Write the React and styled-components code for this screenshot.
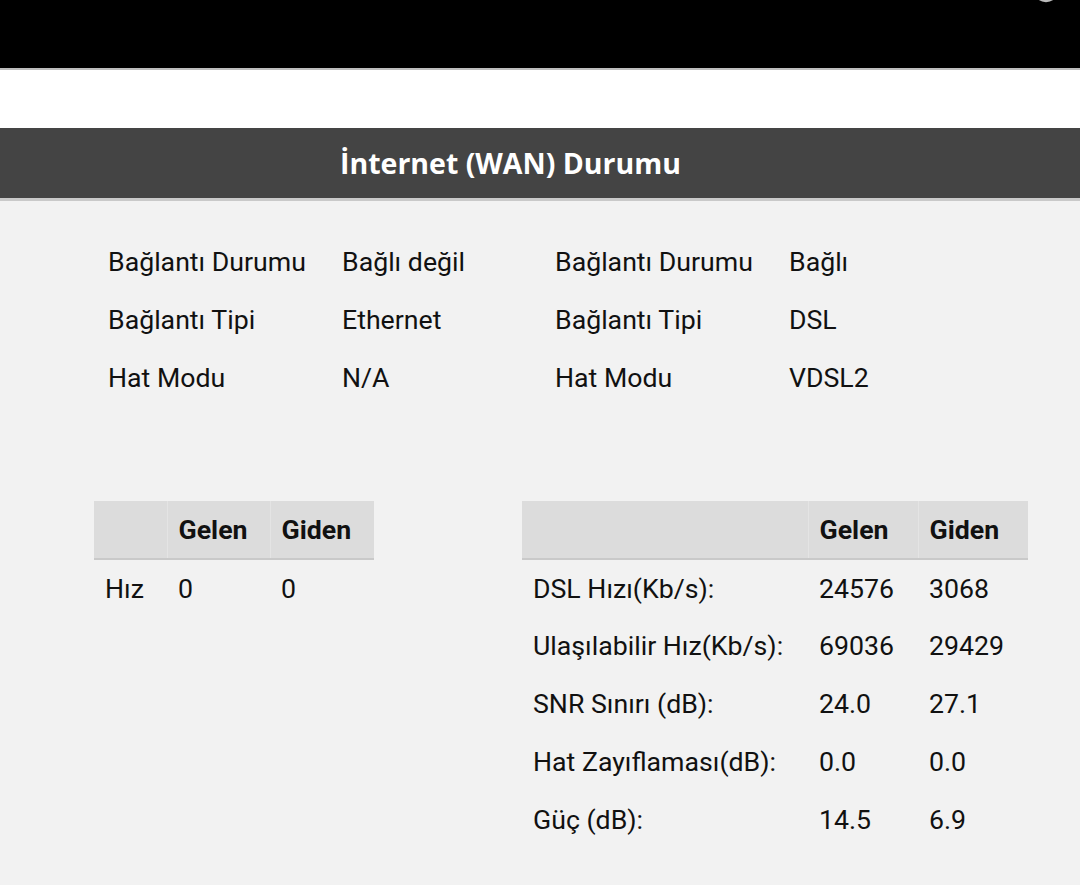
import React from "react";
import styled, { createGlobalStyle } from "styled-components";

const GlobalStyle = createGlobalStyle`
  html, body {
    margin: 0;
    padding: 0;
    background: #f2f2f2;
    font-family: Roboto, "Liberation Sans", sans-serif;
    color: #111;
  }
`;

const infoLeft = [
  ["Bağlantı Durumu", "Bağlı değil"],
  ["Bağlantı Tipi", "Ethernet"],
  ["Hat Modu", "N/A"],
];

const infoRight = [
  ["Bağlantı Durumu", "Bağlı"],
  ["Bağlantı Tipi", "DSL"],
  ["Hat Modu", "VDSL2"],
];

const dslRows = [
  ["DSL Hızı(Kb/s):", "24576", "3068"],
  ["Ulaşılabilir Hız(Kb/s):", "69036", "29429"],
  ["SNR Sınırı (dB):", "24.0", "27.1"],
  ["Hat Zayıflaması(dB):", "0.0", "0.0"],
  ["Güç (dB):", "14.5", "6.9"],
];

const App = () => {
  return (
    <Page>
      <GlobalStyle />
      <TopBar>
        <TopIcon viewBox="0 0 24 24">
          <circle cx="12" cy="12" r="10" fill="none" stroke="#bbb" strokeWidth="2.5" />
        </TopIcon>
      </TopBar>
      <Spacer />
      <TitleBar>İnternet (WAN) Durumu</TitleBar>
      <Content>
        <InfoGrid>
          <InfoGroup>
            {infoLeft.map(([k, v]) => (
              <React.Fragment key={k}>
                <InfoCell>{k}</InfoCell>
                <InfoCell>{v}</InfoCell>
              </React.Fragment>
            ))}
          </InfoGroup>
          <InfoGroup>
            {infoRight.map(([k, v]) => (
              <React.Fragment key={k}>
                <InfoCell>{k}</InfoCell>
                <InfoCell>{v}</InfoCell>
              </React.Fragment>
            ))}
          </InfoGroup>
        </InfoGrid>

        <Tables>
          <Table width={280}>
            <colgroup>
              <col style={{ width: 73 }} />
              <col style={{ width: 103 }} />
              <col style={{ width: 104 }} />
            </colgroup>
            <thead>
              <tr>
                <Th />
                <Th>Gelen</Th>
                <Th>Giden</Th>
              </tr>
            </thead>
            <tbody>
              <tr>
                <Td>Hız</Td>
                <Td>0</Td>
                <Td>0</Td>
              </tr>
            </tbody>
          </Table>

          <Table width={506}>
            <colgroup>
              <col style={{ width: 286 }} />
              <col style={{ width: 110 }} />
              <col style={{ width: 110 }} />
            </colgroup>
            <thead>
              <tr>
                <Th />
                <Th>Gelen</Th>
                <Th>Giden</Th>
              </tr>
            </thead>
            <tbody>
              {dslRows.map(([label, down, up]) => (
                <tr key={label}>
                  <Td>{label}</Td>
                  <Td>{down}</Td>
                  <Td>{up}</Td>
                </tr>
              ))}
            </tbody>
          </Table>
        </Tables>
      </Content>
    </Page>
  );
};

const Page = styled.div`
  width: 1080px;
  min-height: 885px;
  display: flex;
  flex-direction: column;
  background: #f2f2f2;
`;

const TopBar = styled.div`
  height: 68px;
  background: #000;
  border-bottom: 2px solid #bdbdbd;
  display: flex;
  justify-content: flex-end;
  overflow: hidden;
`;

const TopIcon = styled.svg`
  width: 28px;
  height: 28px;
  margin: -25px 20px 0 0;
`;

const Spacer = styled.div`
  height: 58px;
  background: #fff;
`;

const TitleBar = styled.div`
  height: 70px;
  background: #444;
  border-bottom: 3px solid #c9c9c9;
  color: #fff;
  font-family: "Open Sans", Roboto, sans-serif;
  font-weight: 700;
  font-size: 28.5px;
  display: flex;
  align-items: center;
  justify-content: center;
  padding-right: 59px;
`;

const Content = styled.div`
  flex: 1;
  padding: 32px 0 0 94px;
`;

const InfoGrid = styled.div`
  display: grid;
  grid-template-columns: 447px 447px;
  padding-left: 14px;
`;

const InfoGroup = styled.div`
  display: grid;
  grid-template-columns: 234px 1fr;
  grid-auto-rows: 58px;
`;

const InfoCell = styled.div`
  font-size: 26.7px;
  display: flex;
  align-items: center;
  white-space: nowrap;
`;

const Tables = styled.div`
  display: flex;
  align-items: flex-start;
  gap: 148px;
  margin-top: 94px;
`;

const Table = styled.table`
  width: ${(p) => p.width}px;
  border-collapse: collapse;
  table-layout: fixed;
  font-size: 26.7px;
`;

const Th = styled.th`
  height: 58px;
  padding: 0 11px;
  background: #dcdcdc;
  border-left: 1px solid #e4e4e4;
  border-bottom: 2px solid #c9c9c9;
  text-align: left;
  font-weight: 700;
  box-sizing: border-box;
  &:first-child {
    border-left: none;
  }
`;

const Td = styled.td`
  height: 58px;
  padding: 0 11px;
  white-space: nowrap;
  box-sizing: border-box;
`;

export default App;
